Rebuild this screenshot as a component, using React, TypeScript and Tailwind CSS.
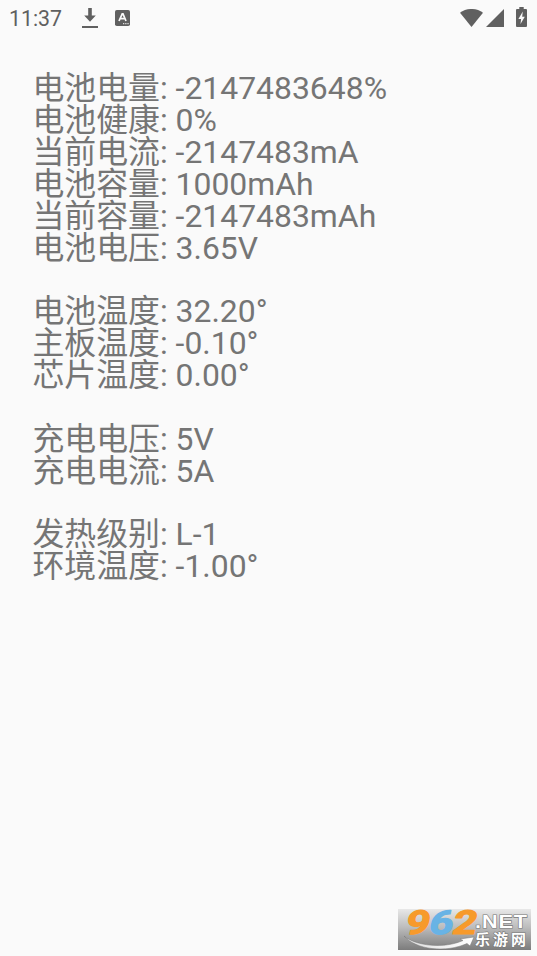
const groups: string[][] = [
  [
    '电池电量: -2147483648%',
    '电池健康: 0%',
    '当前电流: -2147483mA',
    '电池容量: 1000mAh',
    '当前容量: -2147483mAh',
    '电池电压: 3.65V',
  ],
  ['电池温度: 32.20°', '主板温度: -0.10°', '芯片温度: 0.00°'],
  ['充电电压: 5V', '充电电流: 5A'],
  ['发热级别: L-1', '环境温度: -1.00°'],
]

function StatusBar() {
  return (
    <header className="flex h-9 items-center justify-between pr-[10px] pl-[9px] text-[#606060]">
      <div className="flex items-center">
        <span className="w-[73px] pt-px text-[21.3px] leading-6">11:37</span>
        <svg className="h-5 w-4" viewBox="0 0 16 20" fill="currentColor">
          <path d="M6.2 0h3.6v7.5h4L8 13.8 2.2 7.5h4zM0 18h16v2H0z" />
        </svg>
        <svg className="ml-[17px] h-4 w-[15px]" viewBox="0 0 15 16">
          <rect width="15" height="16" rx="1.8" fill="currentColor" />
          <path d="M4 11 7.2 3.8h.8L11 11M5.2 8.7h4.6" fill="none" stroke="#fafafa" strokeWidth="1.7" />
          <path d="M8 13.7h1.3M10.2 13.7h1.3M12.4 13.7h1.3" stroke="#fafafa" />
        </svg>
      </div>
      <div className="flex items-center">
        <svg className="h-[18px] w-[23px]" viewBox="0 0 23 18" fill="currentColor">
          <path d="M0 3.8C6.5-1.3 16.5-1.3 23 3.8L11.5 18z" />
        </svg>
        <svg className="ml-[3px] h-[18px] w-[18px]" viewBox="0 0 18 18" fill="currentColor">
          <path d="M18 0v18H0z" />
        </svg>
        <svg className="ml-3 h-5 w-[11px] -translate-y-px" viewBox="0 0 11 20">
          <path d="M3.3 0h4.4v2H10q1 0 1 1v16q0 1-1 1H1q-1 0-1-1V3q0-1 1-1h2.3z" fill="currentColor" />
          <path d="M6.8 4.5 2.4 12h2.7l-.6 5L8.8 9.8H6.2z" fill="#fafafa" />
        </svg>
      </div>
    </header>
  )
}

function SiteBadge() {
  return (
    <svg className="h-[41px] w-[133px] overflow-visible" viewBox="0 0 133 41">
      <defs>
        <linearGradient id="badge" x2="0" y2="1">
          <stop offset="0" stopColor="#e8e8e8" />
          <stop offset="0.45" stopColor="#bcbcbc" />
          <stop offset="1" stopColor="#7c7c7c" />
        </linearGradient>
        <linearGradient id="swoosh">
          <stop offset="0" stopColor="#dddddd" />
          <stop offset="1" stopColor="#ffffff" />
        </linearGradient>
      </defs>
      <rect width="133" height="41" fill="url(#badge)" />
      <path d="M6 27C18 37 46 40 65 31.5l-3-1.5 14-2-4 9-3-2.5C48 44 18 41 6 27z" fill="url(#swoosh)" stroke="#777777" strokeWidth="0.5" />
      <g
        className="font-['Roboto',sans-serif] text-[33px] font-bold"
        transform="translate(0 24.5) skewX(-12)"
        strokeWidth="1.2"
        strokeLinejoin="round"
      >
        <text x="6" y="0" textLength="24" lengthAdjust="spacingAndGlyphs" fill="#f79a2b" stroke="#f79a2b">9</text>
        <text x="29.5" y="0" textLength="24" lengthAdjust="spacingAndGlyphs" fill="#68b3e5" stroke="#68b3e5">6</text>
        <text x="53" y="0" textLength="24" lengthAdjust="spacingAndGlyphs" fill="#f79a2b" stroke="#f79a2b">2</text>
      </g>
      <g fill="#ffffff" stroke="#777777" strokeWidth="1.2" paintOrder="stroke">
        <text transform="translate(77 19) scale(1.14 1)" className="font-['Liberation_Sans',sans-serif] text-[19px] font-bold tracking-[0.8px]">
          .NET
        </text>
        <text x="77" y="36" textLength="51" className="font-['Noto_Sans_CJK_SC',sans-serif] text-[15px] font-bold">
          乐游网
        </text>
      </g>
    </svg>
  )
}

export default function App() {
  return (
    <div className="flex h-[956px] w-[537px] flex-col overflow-hidden bg-[#fafafa] font-['Roboto','Noto_Sans_CJK_SC',sans-serif]">
      <StatusBar />
      <main className="flex flex-1 flex-col gap-[31.9px] pt-[37.2px] pl-[32.4px] text-[31.9px] leading-[31.87px] text-[#757575]">
        {groups.map((lines) => (
          <section key={lines[0]}>
            {lines.map((line) => (
              <p key={line} className="whitespace-nowrap">{line}</p>
            ))}
          </section>
        ))}
      </main>
      <footer className="flex justify-end pr-[6px] pb-[6px]">
        <SiteBadge />
      </footer>
    </div>
  )
}
